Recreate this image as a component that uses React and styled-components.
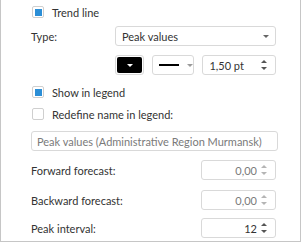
import React from "react";
import styled, { createGlobalStyle } from "styled-components";

const GlobalStyle = createGlobalStyle`
  body {
    margin: 0;
    background: #ffffff;
    font-family: Lato, "Liberation Sans", sans-serif;
    font-size: 11px;
    color: #333333;
  }
`;

const Panel = styled.div`
  box-sizing: border-box;
  width: 301px;
  height: 242px;
  border: 1px solid #c6c6c6;
  border-top: none;
  padding: 5px 24px 0 30px;
  display: flex;
  flex-direction: column;
`;

const CheckRow = styled.label`
  display: flex;
  align-items: center;
  gap: 8px;
  height: 14px;
  margin: ${(p) => p.$m || "0"};
`;

const Box = styled.span`
  box-sizing: border-box;
  width: 12px;
  height: 12px;
  border: 1px solid #cfcfcf;
  border-radius: 2px;
  background: #fff;
  display: flex;
  align-items: center;
  justify-content: center;
  margin-left: 1px;
  &::after {
    content: "";
    display: ${(p) => (p.$checked ? "block" : "none")};
    width: 7px;
    height: 7px;
    background: #2b8ed6;
  }
`;

const Row = styled.div`
  display: flex;
  align-items: center;
  justify-content: space-between;
  margin: ${(p) => p.$m || "0"};
`;

const Label = styled.span`
  color: #333333;
`;

const Field = styled.div`
  box-sizing: border-box;
  height: 20px;
  width: ${(p) => p.$w}px;
  border: 1px solid #d9d9d9;
  border-radius: 3px;
  background: #fff;
  display: flex;
  align-items: center;
  padding: 0 6px;
  gap: 4px;
  color: ${(p) => (p.$muted ? "#7a7a7a" : "#333333")};
`;

const FieldText = styled.span`
  flex: 1;
  text-align: ${(p) => p.$align || "left"};
  white-space: nowrap;
  overflow: hidden;
`;

const Caret = styled.span`
  flex-shrink: 0;
  width: 0;
  height: 0;
  border-left: 3px solid transparent;
  border-right: 3px solid transparent;
  border-top: 3px solid ${(p) => p.$color || "#666"};
`;

const Tools = styled.div`
  display: flex;
  align-items: center;
  gap: 8px;
  margin: 9px 0 0 84px;
`;

const ColorButton = styled.div`
  box-sizing: border-box;
  width: 30px;
  height: 20px;
  border: 1px solid #d9d9d9;
  border-radius: 3px;
  padding: 1px;
  background: #fff;
  display: flex;
`;

const Swatch = styled.div`
  flex: 1;
  background: #000;
  border-radius: 2px;
  display: flex;
  align-items: center;
  justify-content: center;
`;

const LineSample = styled.span`
  flex-shrink: 0;
  width: 20px;
  height: 2px;
  background: #000;
  margin-right: 4px;
`;

const Spin = styled.span`
  display: flex;
  flex-direction: column;
  gap: 4px;
  margin-right: 2px;
`;

const Up = styled.span`
  width: 0;
  height: 0;
  border-left: 3px solid transparent;
  border-right: 3px solid transparent;
  border-bottom: 3px solid ${(p) => (p.$off ? "#b5b5b5" : "#555")};
`;

const Down = styled(Up)`
  border-bottom: none;
  border-top: 3px solid ${(p) => (p.$off ? "#b5b5b5" : "#555")};
`;

const Spinner = ({ value, off, align }) => (
  <Field $w={75} $muted={off}>
    <FieldText $align={align}>{value}</FieldText>
    <Spin>
      <Up $off={off} />
      <Down $off={off} />
    </Spin>
  </Field>
);

const NameInput = styled(Field)`
  width: 247px;
  margin-top: 10px;
  padding: 0 5px;
`;

export default function App() {
  return (
    <>
      <GlobalStyle />
      <Panel>
        <CheckRow>
          <Box $checked />
          Trend line
        </CheckRow>
        <Row $m="7px 0 0 0">
          <Label>Type:</Label>
          <Field $w={161}>
            <FieldText>Peak values</FieldText>
            <Caret />
          </Field>
        </Row>
        <Tools>
          <ColorButton>
            <Swatch>
              <Caret $color="#fff" />
            </Swatch>
          </ColorButton>
          <Field $w={42}>
            <LineSample />
            <Caret $color="#999" />
          </Field>
          <Spinner value="1,50 pt" />
        </Tools>
        <CheckRow $m="10px 0 0 0">
          <Box $checked />
          Show in legend
        </CheckRow>
        <CheckRow $m="8px 0 0 0">
          <Box />
          Redefine name in legend:
        </CheckRow>
        <NameInput $muted>
          <FieldText>Peak values (Administrative Region Murmansk)</FieldText>
        </NameInput>
        <Row $m="9px 0 0 0">
          <Label>Forward forecast:</Label>
          <Spinner value="0,00" off align="right" />
        </Row>
        <Row $m="10px 0 0 0">
          <Label>Backward forecast:</Label>
          <Spinner value="0,00" off align="right" />
        </Row>
        <Row $m="8px 0 0 0">
          <Label>Peak interval:</Label>
          <Spinner value="12" align="right" />
        </Row>
      </Panel>
    </>
  );
}
